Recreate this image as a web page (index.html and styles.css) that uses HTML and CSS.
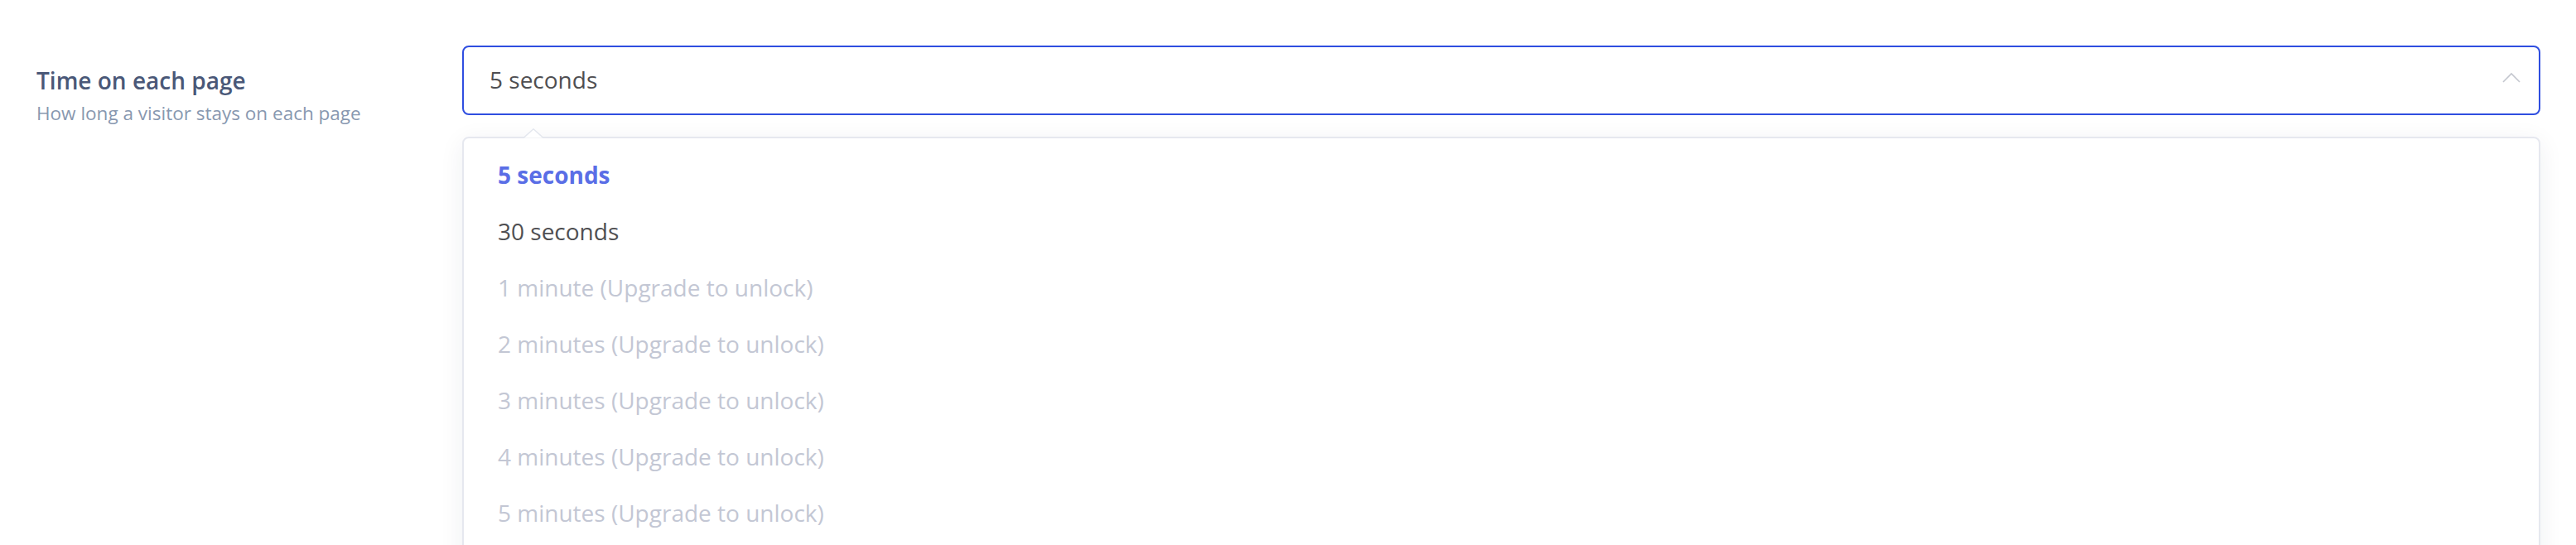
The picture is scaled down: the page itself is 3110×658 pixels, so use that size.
FILE: index.html
```html
<!DOCTYPE html>
<html lang="en">
<head>
<meta charset="utf-8">
<title>Time on each page</title>
<link rel="stylesheet" href="styles.css">
</head>
<body>
<div class="field">
  <div class="field-info">
    <div class="field-label">Time on each page</div>
    <div class="field-help">How long a visitor stays on each page</div>
  </div>
  <div class="field-control">
    <div class="select">
      <span class="select-value">5 seconds</span>
      <svg class="chevron" width="22" height="13" viewBox="0 0 22 13"><path d="M1 12 L11 2 L21 12" fill="none" stroke="#c4c7cf" stroke-width="1.6"/></svg>
    </div>
    <div class="menu">
      <svg class="menu-caret" width="24" height="12" viewBox="0 0 24 12"><path d="M0 11.5 L12 0.8 L24 11.5" fill="#fff" stroke="#e4e7ee" stroke-width="1.5"/></svg>
      <ul class="options">
        <li class="option selected">5 seconds</li>
        <li class="option">30 seconds</li>
        <li class="option disabled">1 minute (Upgrade to unlock)</li>
        <li class="option disabled">2 minutes (Upgrade to unlock)</li>
        <li class="option disabled">3 minutes (Upgrade to unlock)</li>
        <li class="option disabled">4 minutes (Upgrade to unlock)</li>
        <li class="option disabled">5 minutes (Upgrade to unlock)</li>
      </ul>
    </div>
  </div>
</div>
</body>
</html>
```
FILE: styles.css
```css
html, body {
  margin: 0;
  padding: 0;
  background: #ffffff;
  height: 658px;
  overflow: hidden;
}
body {
  font-family: "Open Sans", "Noto Sans", sans-serif;
}
.field {
  display: flex;
  padding: 55px 0 0 44px;
}
.field-info {
  width: 514px;
  flex: none;
  padding-top: 23px;
}
.field-label {
  font-size: 28px;
  font-weight: 600;
  color: #4a5878;
  line-height: 38px;
}
.field-help {
  font-size: 22.5px;
  color: #8898b0;
  line-height: 30px;
  margin-top: 6px;
}
.field-control {
  width: 2509px;
  flex: none;
}
.select {
  box-sizing: border-box;
  height: 84px;
  border: 2px solid #2f4ee0;
  border-radius: 8px;
  display: flex;
  align-items: center;
  justify-content: space-between;
  padding: 0 22px 0 31px;
}
.select-value {
  font-size: 28px;
  color: #4f4f52;
  line-height: 38px;
  margin-top: -2px;
}
.chevron {
  display: block;
  margin-top: -8px;
}
.menu {
  position: relative;
  margin-top: 26px;
  box-sizing: border-box;
  border: 2px solid #e6e8ef;
  border-radius: 8px;
  background: #fff;
  box-shadow: 0 6px 30px rgba(30, 40, 70, 0.07);
  height: 600px;
}
.menu-caret {
  position: absolute;
  top: -12px;
  left: 72px;
  display: block;
}
.options {
  list-style: none;
  margin: 0;
  padding: 10px 0 0 0;
}
.option {
  font-size: 28px;
  line-height: 68px;
  height: 68px;
  padding-left: 41px;
  color: #4f4f52;
}
.option.selected {
  color: #5a6ee6;
  font-weight: 700;
}
.option.disabled {
  color: #c3c7d4;
}
```
